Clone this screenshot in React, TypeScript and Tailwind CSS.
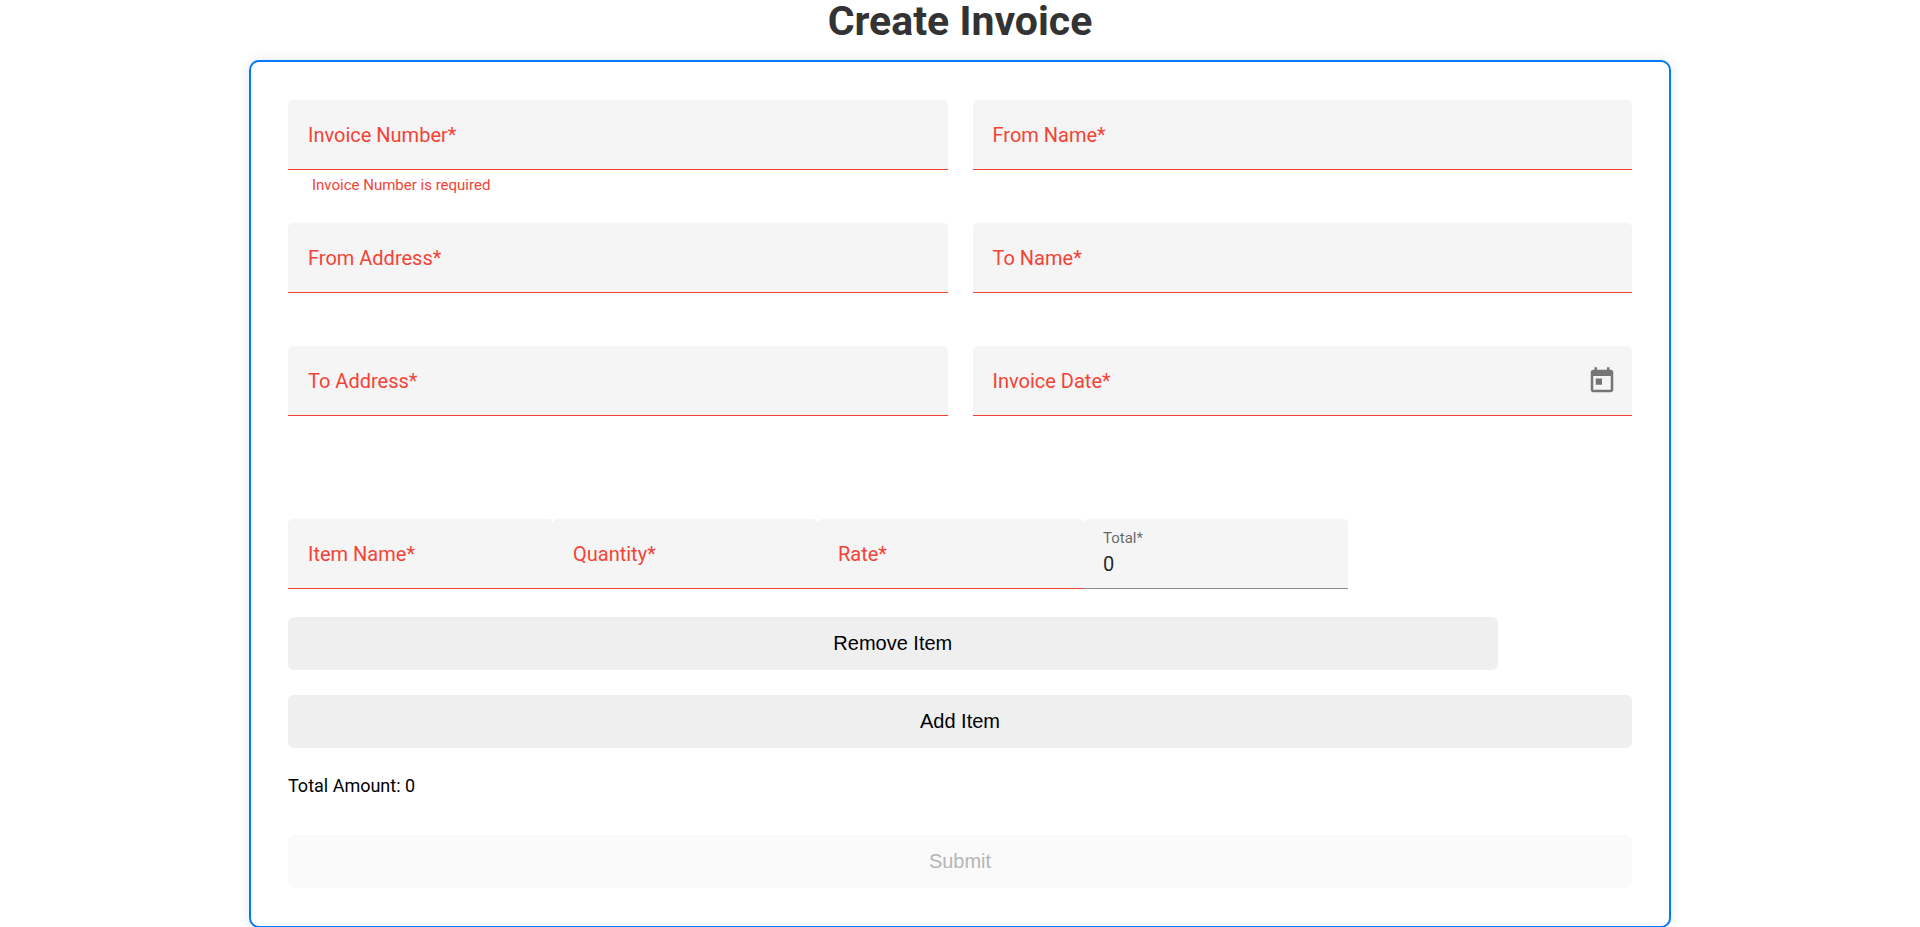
import React, { useId } from "react";

type FieldProps = {
  label: string;
  name: string;
  error?: string;
  trailing?: React.ReactNode;
};

function Field({ label, name, error, trailing }: FieldProps) {
  const id = useId();
  return (
    <div className="min-w-0">
      <div className="flex h-[70px] items-center rounded-t-[5px] border-b border-[#f44336] bg-[#f5f5f5]">
        <div className="grid h-full min-w-0 flex-1 items-center">
          <input
            id={id}
            name={name}
            required
            aria-invalid="true"
            className="peer col-start-1 row-start-1 h-full w-full min-w-0 bg-transparent px-5 text-xl text-black/87 outline-none"
          />
          <label
            htmlFor={id}
            className="pointer-events-none col-start-1 row-start-1 px-5 text-xl text-[#f44336] peer-valid:invisible peer-focus:invisible"
          >
            {label}*
          </label>
        </div>
        {trailing}
      </div>
      {error && <p className="h-7 px-6 pt-[3px] text-[15px] leading-6 text-[#f44336]">{error}</p>}
    </div>
  );
}

function TotalField() {
  return (
    <div className="flex h-[70px] flex-col rounded-t-[5px] border-b border-[#8c8c8c] bg-[#f5f5f5] px-5 pt-[9px]">
      <label htmlFor="item-total" className="text-[15px] leading-5 text-black/60">
        Total*
      </label>
      <input
        id="item-total"
        readOnly
        value="0"
        className="h-8 w-full bg-transparent text-xl leading-8 text-black/87 outline-none"
      />
    </div>
  );
}

function CalendarButton() {
  return (
    <button type="button" aria-label="Open calendar" className="mr-[15px] text-[#757575]">
      <svg viewBox="0 0 24 24" className="size-[30px]" fill="currentColor" aria-hidden="true">
        <path d="M19 3h-1V1h-2v2H8V1H6v2H5c-1.11 0-1.99.9-1.99 2L3 19c0 1.1.89 2 2 2h14c1.1 0 2-.9 2-2V5c0-1.1-.9-2-2-2zm0 16H5V8h14v11zM7 10h5v5H7z" />
      </svg>
    </button>
  );
}

const buttonClass =
  "block h-[53px] rounded-md bg-[#efefef] pb-0.5 font-['Liberation_Sans',Arial,sans-serif] text-xl text-black disabled:bg-[#fafafa] disabled:text-[#b5b5b5]";

export default function App() {
  return (
    <main className="bg-white font-[Roboto,sans-serif] text-black">
      <h1 className="text-center text-[41px] leading-[42px] font-bold text-[#333333]">Create Invoice</h1>
      <form
        className="mx-auto mt-[18px] w-full max-w-[1422px] rounded-[10px] border-2 border-[#007bff] bg-white px-[37px] py-[38px] shadow-[0_0_12px_rgba(0,0,0,0.1)]"
        onSubmit={(e) => e.preventDefault()}
      >
        <div className="grid auto-rows-[98px] grid-cols-2 gap-[25px]">
          <Field label="Invoice Number" name="invoiceNumber" error="Invoice Number is required" />
          <Field label="From Name" name="fromName" />
          <Field label="From Address" name="fromAddress" />
          <Field label="To Name" name="toName" />
          <Field label="To Address" name="toAddress" />
          <Field label="Invoice Date" name="invoiceDate" trailing={<CalendarButton />} />
        </div>

        <div className="mt-[75px] grid max-w-[1060px] grid-cols-4">
          <Field label="Item Name" name="itemName" />
          <Field label="Quantity" name="quantity" />
          <Field label="Rate" name="rate" />
          <TotalField />
        </div>
        <button type="button" className={`${buttonClass} mt-7 w-9/10`}>
          Remove Item
        </button>
        <button type="button" className={`${buttonClass} mt-[25px] w-full`}>
          Add Item
        </button>
        <p className="mt-[26px] text-lg leading-6">Total Amount: 0</p>
        <button type="submit" disabled className={`${buttonClass} mt-[37px] w-full`}>
          Submit
        </button>
      </form>
    </main>
  );
}
